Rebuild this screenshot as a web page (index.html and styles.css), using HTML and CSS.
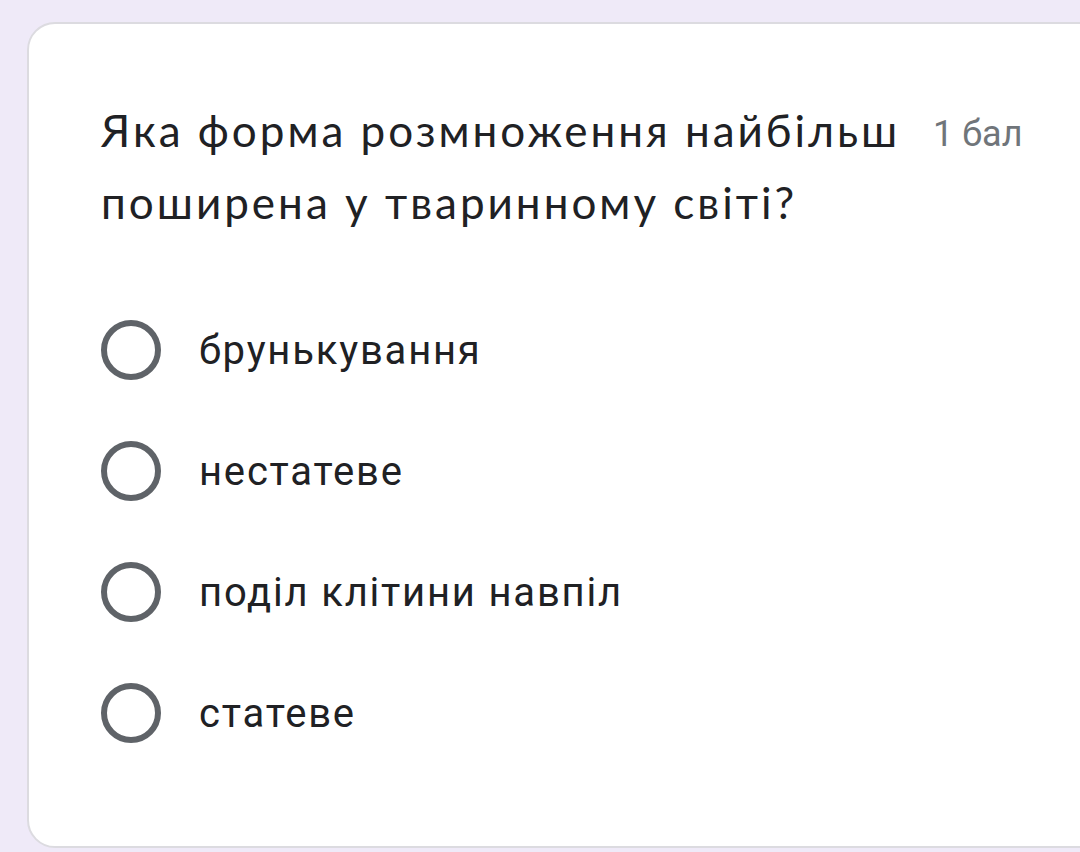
FILE: index.html
```html
<!DOCTYPE html>
<html lang="uk">
<head>
<meta charset="utf-8">
<link rel="stylesheet" href="styles.css">
</head>
<body>
<div class="card">
  <div class="question-row">
    <div class="question">Яка форма розмноження найбільш поширена у тваринному світі?</div>
    <div class="points">1 бал</div>
  </div>
  <div class="options">
    <div class="option"><span class="radio"></span><span class="label">брунькування</span></div>
    <div class="option"><span class="radio"></span><span class="label">нестатеве</span></div>
    <div class="option"><span class="radio"></span><span class="label">поділ клітини навпіл</span></div>
    <div class="option"><span class="radio"></span><span class="label">статеве</span></div>
  </div>
</div>
</body>
</html>
```

FILE: styles.css
```css
html, body {
  margin: 0;
  padding: 0;
}
body {
  background: #efeaf8;
  width: 1080px;
  height: 852px;
  overflow: hidden;
  padding-top: 22px;
  box-sizing: border-box;
}
.card {
  margin-left: 27px;
  width: 1120px;
  height: 826px;
  box-sizing: border-box;
  background: #fff;
  border: 2px solid #dcdbe0;
  border-radius: 28px;
  padding: 70px 0 0 72px;
}
.question-row {
  display: flex;
  align-items: flex-start;
}
.question {
  width: 815px;
  font-family: Lato, "Noto Sans", sans-serif;
  font-size: 44px;
  letter-spacing: 3px;
  line-height: 72px;
  color: #202124;
}
.points {
  margin-left: 17px;
  margin-top: 8px;
  font-family: Roboto, sans-serif;
  font-size: 36px;
  line-height: 64px;
  color: #70757a;
}
.options {
  margin-top: 82px;
  display: flex;
  flex-direction: column;
  gap: 61px;
}
.option {
  display: flex;
  align-items: center;
  height: 60px;
}
.radio {
  width: 60px;
  height: 60px;
  box-sizing: border-box;
  border: 6px solid #5f6368;
  border-radius: 50%;
  flex: 0 0 auto;
}
.label {
  margin-left: 38px;
  font-family: Roboto, sans-serif;
  font-size: 40px;
  letter-spacing: 1.8px;
  color: #202124;
}
```
